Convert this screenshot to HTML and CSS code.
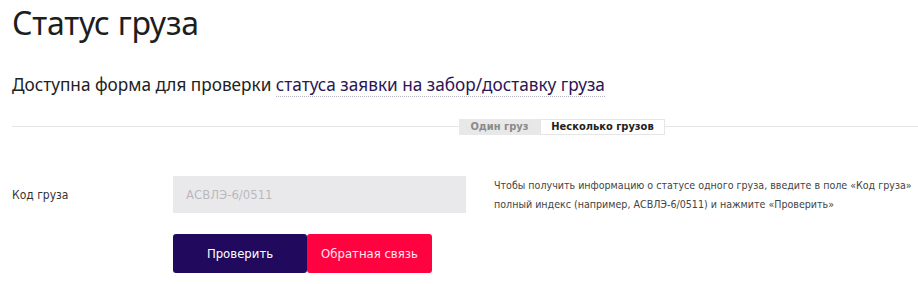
FILE: index.html
```html
<!DOCTYPE html>
<html lang="ru">
<head>
<meta charset="utf-8">
<title>Статус груза</title>
<link rel="stylesheet" href="styles.css">
</head>
<body>
<div class="page">
  <h1 class="title">Статус груза</h1>
  <p class="lead">Доступна форма для проверки <a class="lead-link" href="#">статуса заявки на забор/доставку груза</a></p>
  <div class="tabs-row">
    <div class="tabs">
      <span class="tab tab-muted">Один груз</span>
      <span class="tab tab-active">Несколько грузов</span>
    </div>
  </div>
  <div class="form-row">
    <label class="label" for="code">Код груза</label>
    <input class="input" id="code" type="text" placeholder="АСВЛЭ-6/0511">
    <p class="help">Чтобы получить информацию о статусе одного груза, введите в поле «Код груза» полный индекс (например, АСВЛЭ-6/0511) и нажмите «Проверить»</p>
  </div>
  <div class="actions">
    <button class="btn btn-primary" type="button">Проверить</button>
    <button class="btn btn-accent" type="button">Обратная связь</button>
  </div>
</div>
</body>
</html>
```
FILE: styles.css
```css
html, body {
  margin: 0;
  padding: 0;
  background: #fff;
}
body {
  font-family: "Noto Sans", "DejaVu Sans", sans-serif;
  color: #222;
}
.page {
  padding: 0 0 0 12px;
}
.title {
  margin: 0;
  padding-top: 4px;
  font-size: 32px;
  font-weight: 400;
  line-height: 38px;
  color: #1e1e1e;
  letter-spacing: -0.2px;
}
.lead {
  margin: 31px 0 0;
  font-size: 17.2px;
  line-height: 24px;
  color: #222;
}
.lead-link {
  color: #2b1556;
  text-decoration: none;
  border-bottom: 1px dotted #b8b4c4;
}
.tabs-row {
  margin-top: 22px;
  display: flex;
  background: linear-gradient(#e6e6e6, #e6e6e6) no-repeat 0 7px / 100% 1px;
}
.tabs {
  margin-left: 447px;
  display: flex;
}
.tab {
  font-family: "DejaVu Sans Condensed", "DejaVu Sans", sans-serif;
  font-size: 11px;
  font-weight: 700;
  height: 16px;
  line-height: 16px;
  box-sizing: border-box;
}
.tab-muted {
  width: 81px;
  background: #e8e8e8;
  color: #8a8a8a;
  text-align: center;
}
.tab-active {
  width: 125px;
  background: #fff;
  border: 1px solid #e6e6e6;
  line-height: 14px;
  color: #222;
  text-align: center;
}
.form-row {
  margin-top: 41px;
  display: flex;
  align-items: flex-start;
}
.label {
  width: 161px;
  flex: none;
  align-self: center;
  font-family: "DejaVu Sans Condensed", "DejaVu Sans", sans-serif;
  font-size: 12px;
  color: #333;
}
.input {
  width: 293px;
  height: 37px;
  box-sizing: border-box;
  border: 0;
  background: #e9e9eb;
  padding: 0 13px;
  font-family: "DejaVu Sans Condensed", "DejaVu Sans", sans-serif;
  font-size: 13px;
  color: #333;
  flex: none;
}
.input::placeholder {
  color: #b9b9bd;
}
.help {
  margin: 0 0 0 28px;
  font-family: "DejaVu Sans Condensed", "DejaVu Sans", sans-serif;
  font-size: 10.6px;
  line-height: 19px;
  color: #444;
  width: 420px;
}
.actions {
  margin: 20px 0 0 161px;
  display: flex;
}
.btn {
  height: 39px;
  border: 0;
  border-radius: 3px;
  font-family: "DejaVu Sans Condensed", "DejaVu Sans", sans-serif;
  font-size: 13px;
  color: #fff;
  padding: 0;
}
.btn-primary {
  width: 134px;
  background: #210a5e;
}
.btn-accent {
  width: 125px;
  background: #ff0341;
  color: #ffe6ee;
}
```
